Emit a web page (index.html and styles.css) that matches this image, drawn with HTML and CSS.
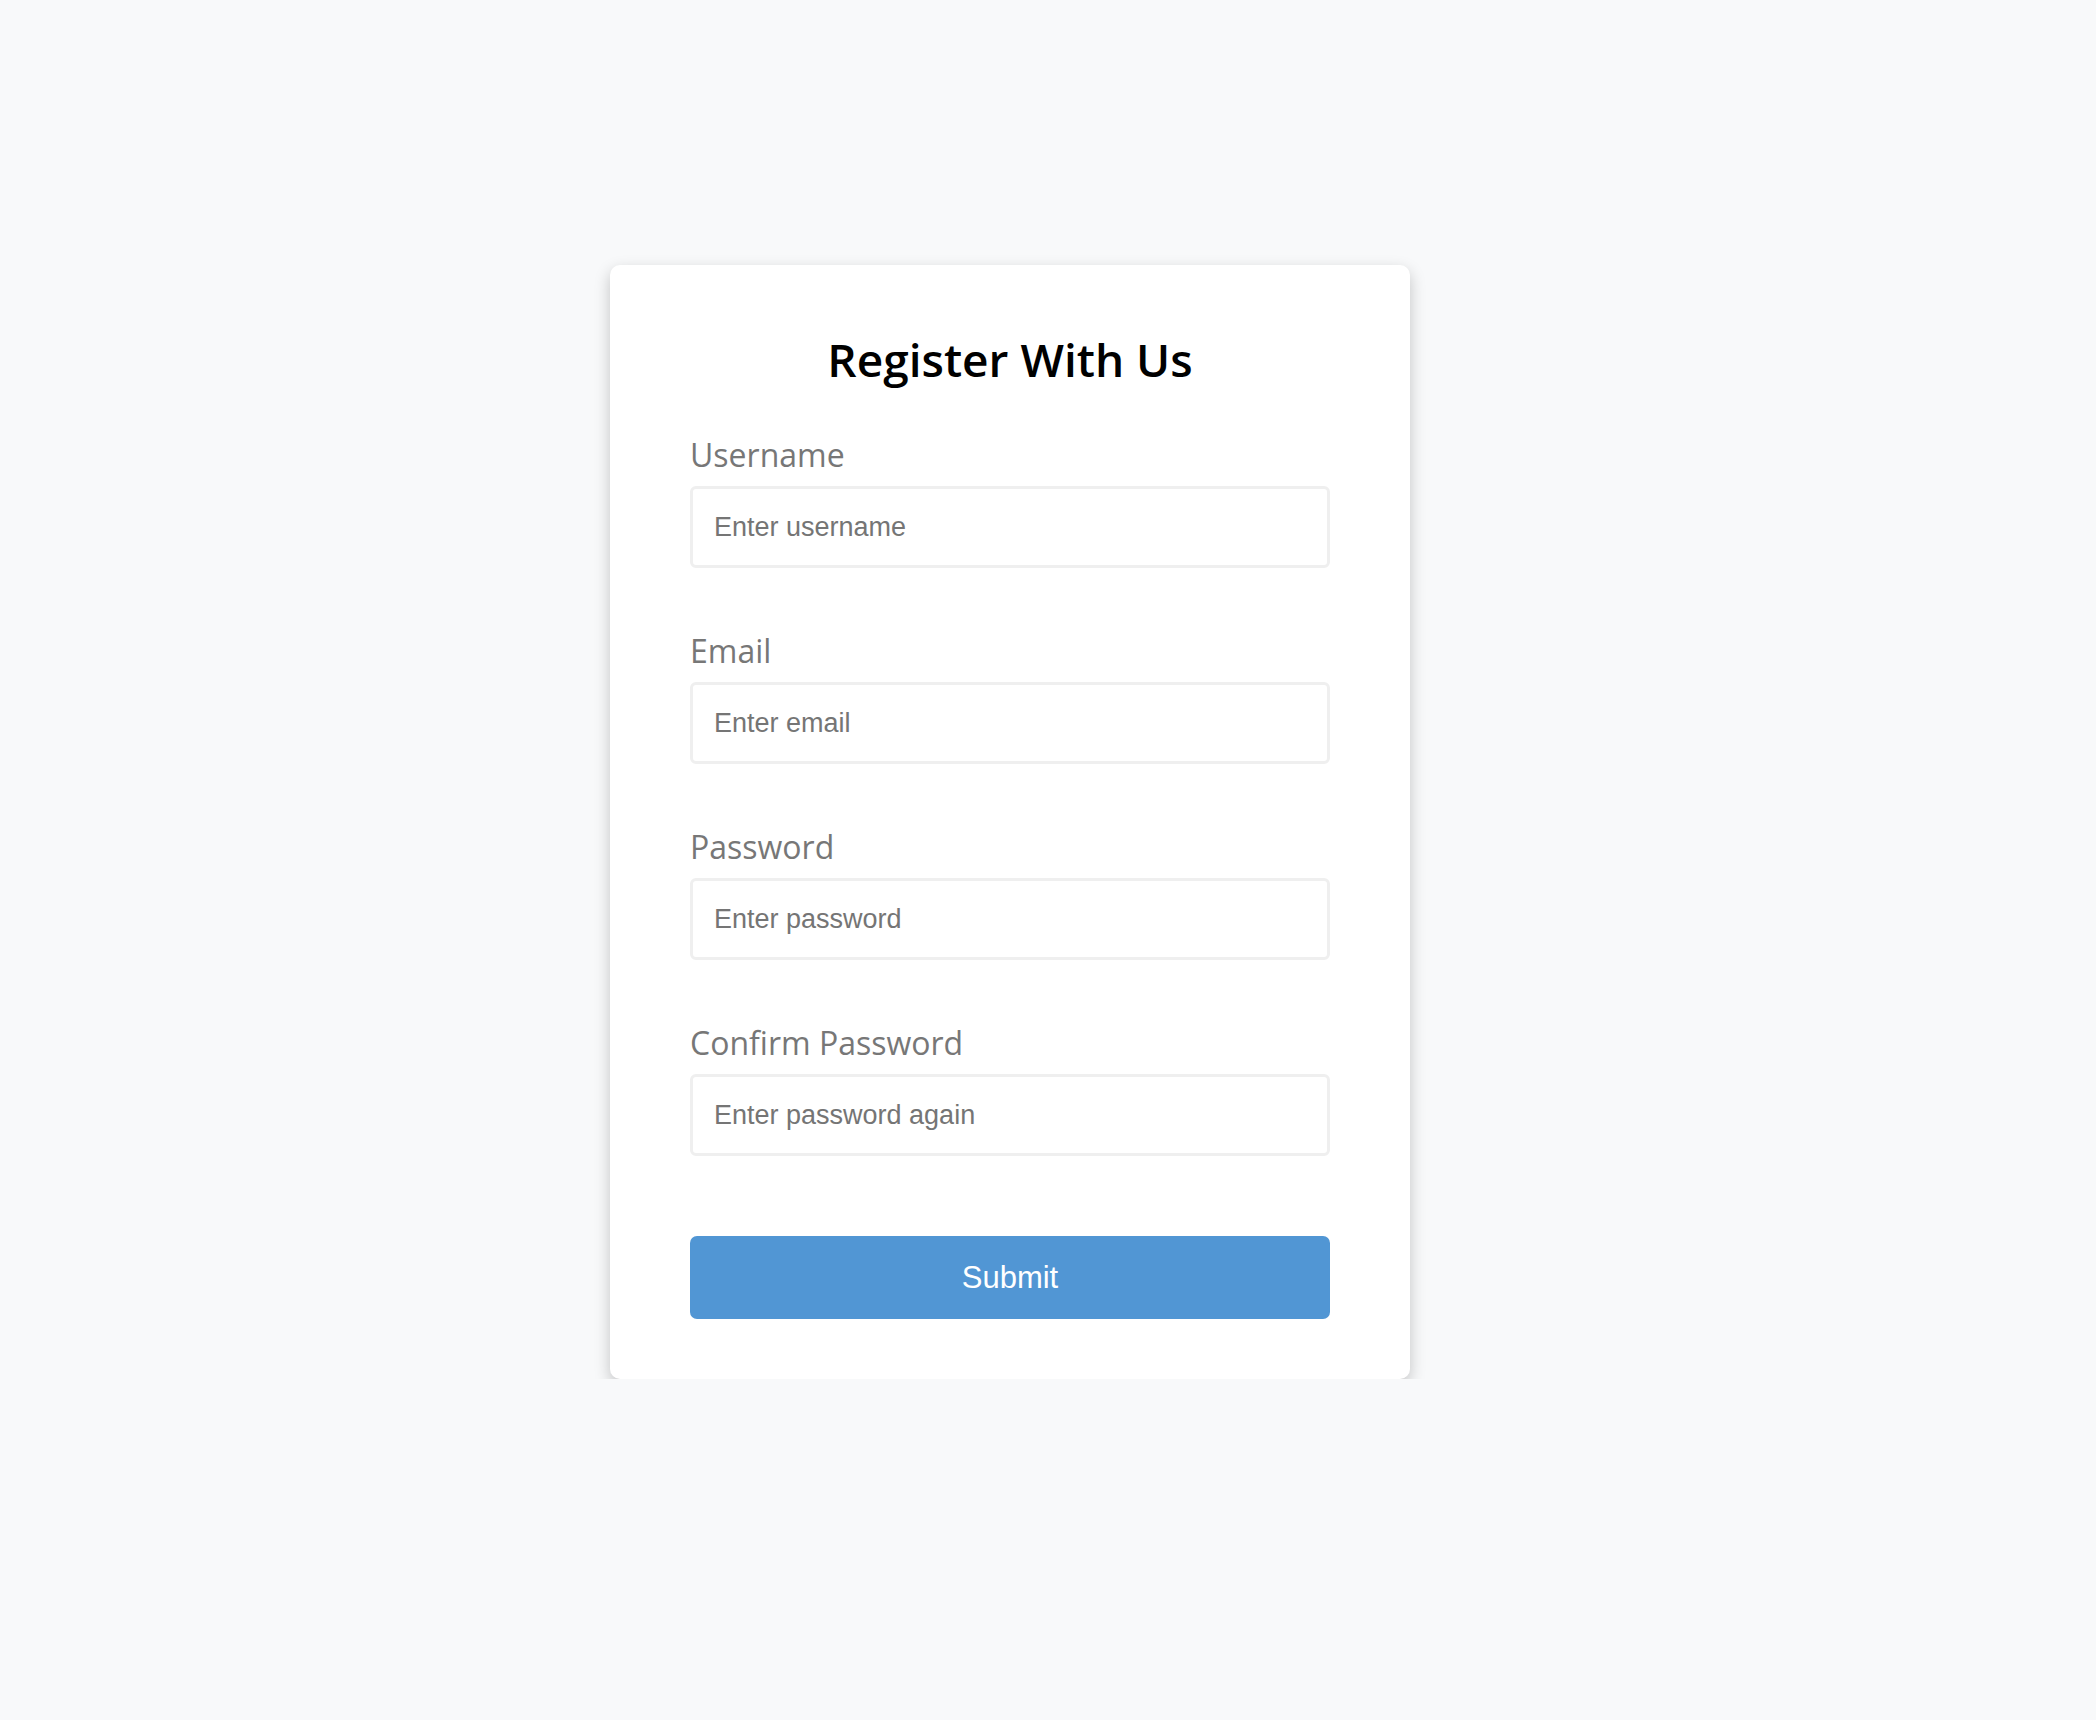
FILE: index.html
```html
<!DOCTYPE html>
<html lang="en">
<head>
    <meta charset="UTF-8">
    <meta name="viewport" content="width=device-width, initial-scale=1.0">
    <title>Register With Us</title>
    <link rel="stylesheet" href="styles.css">
</head>
<body>
    <div class="page">
        <form class="container" onsubmit="return false;">
            <h1>Register With Us</h1>

            <div class="form-group">
                <label for="username">Username</label>
                <input type="text" id="username" placeholder="Enter username">
            </div>

            <div class="form-group">
                <label for="email">Email</label>
                <input type="text" id="email" placeholder="Enter email">
            </div>

            <div class="form-group">
                <label for="password">Password</label>
                <input type="password" id="password" placeholder="Enter password">
            </div>

            <div class="form-group">
                <label for="password2">Confirm Password</label>
                <input type="password" id="password2" placeholder="Enter password again">
            </div>

            <button type="submit">Submit</button>
        </form>
    </div>
</body>
</html>
```

FILE: styles.css
```css
body {
    font-family: "Open Sans", sans-serif;
    background-color: #f8f9fa;
    margin: 0;
}
.page {
    display: flex;
    justify-content: center;
    padding: 265px 76px 0 0;
}
.container {
    width: 800px;
    box-sizing: border-box;
    background-color: #fff;
    padding: 60px 80px;
    border-radius: 10px;
    box-shadow: 0 6px 16px rgba(0, 0, 0, 0.22);
}
h1 {
    text-align: center;
    font-size: 46px;
    font-weight: 600;
    line-height: 69px;
    margin: 0 0 38px;
}
.form-group {
    margin-bottom: 60px;
}
label {
    display: block;
    color: #777;
    font-size: 32px;
    line-height: 45px;
    margin-bottom: 9px;
}
input {
    display: block;
    width: 100%;
    height: 82px;
    box-sizing: border-box;
    border: 3px solid #efefef;
    border-radius: 6px;
    padding: 0 21px;
    font-family: "Liberation Sans", Arial, sans-serif;
    font-size: 27px;
    color: #333;
}
input::placeholder {
    color: #757575;
}
button {
    display: block;
    width: 100%;
    height: 83px;
    margin-top: 80px;
    background-color: #5196d4;
    color: white;
    border: none;
    border-radius: 7px;
    font-family: "Liberation Sans", Arial, sans-serif;
    font-size: 31px;
    cursor: pointer;
}
button:hover {
    background-color: #4688c4;
}
```
